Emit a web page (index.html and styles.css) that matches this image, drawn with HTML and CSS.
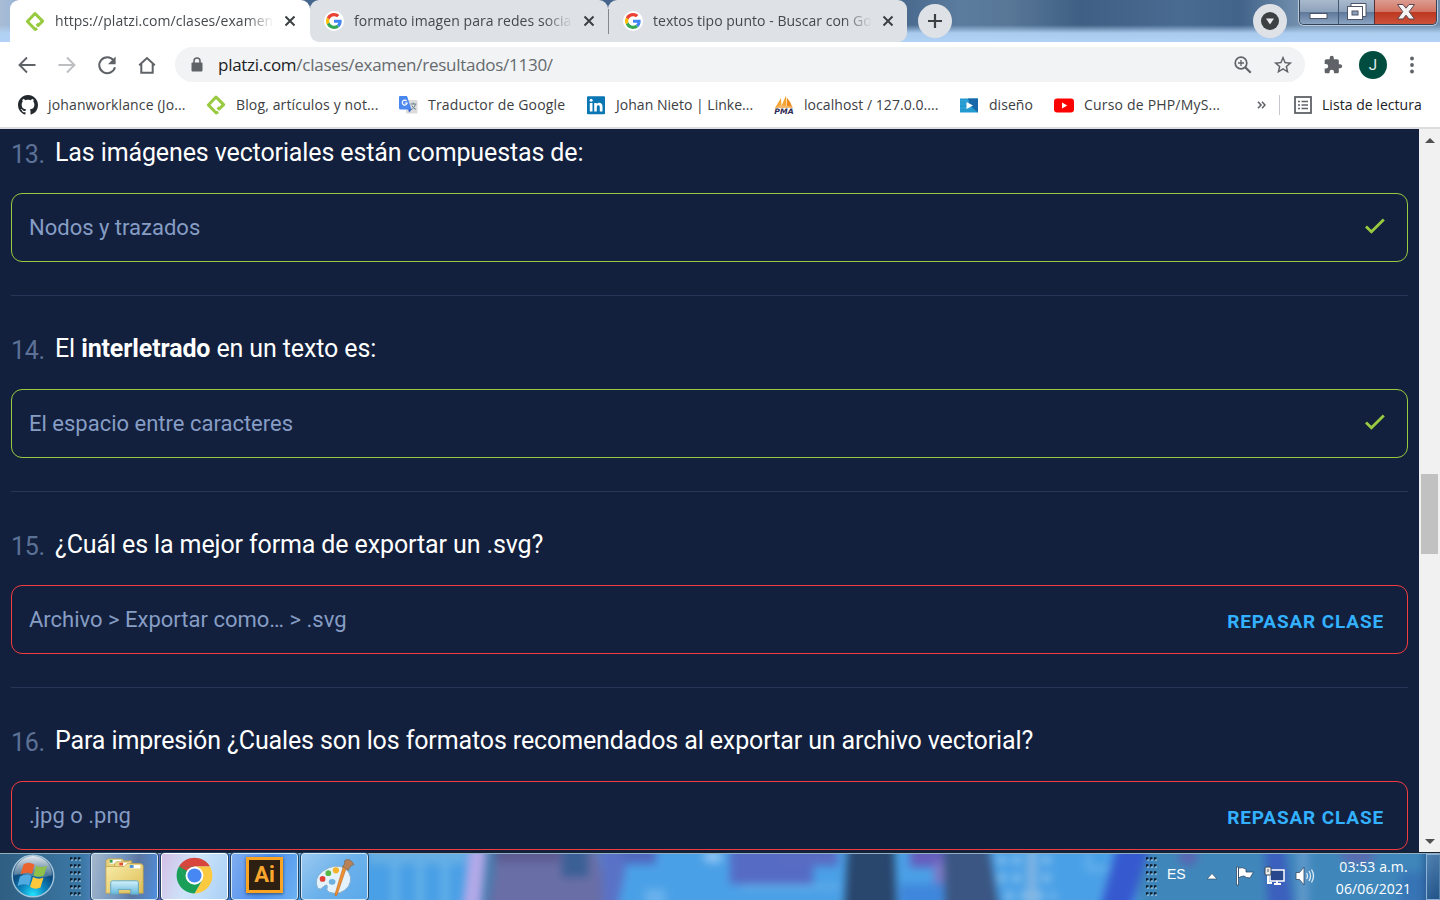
FILE: index.html
```html
<!DOCTYPE html>
<html lang="es">
<head>
<meta charset="utf-8">
<title>Platzi - Resultados del examen</title>
<link rel="stylesheet" href="styles.css">
</head>
<body>
<svg class="defs" width="0" height="0" aria-hidden="true">
  <defs>
    <symbol id="platzi" viewBox="0 0 20 20"><path d="M12.300 17L10.200 18L2.400 10L10 2L17.600 9.600L13.200 14L11.600 12.400" fill="none" stroke="#98ca3f" stroke-width="3" stroke-linejoin="round"/></symbol>
    <symbol id="google" viewBox="0 0 48 48"><path fill="#EA4335" d="M24 9.5c3.54 0 6.71 1.22 9.21 3.6l6.85-6.85C35.9 2.38 30.47 0 24 0 14.62 0 6.51 5.38 2.56 13.22l7.98 6.19C12.43 13.72 17.74 9.5 24 9.5z"/><path fill="#4285F4" d="M46.98 24.55c0-1.57-.15-3.09-.38-4.55H24v9.02h12.94c-.58 2.96-2.26 5.48-4.78 7.18l7.73 6c4.51-4.18 7.09-10.36 7.09-17.65z"/><path fill="#FBBC05" d="M10.53 28.59c-.48-1.45-.76-2.99-.76-4.59s.27-3.14.76-4.59l-7.98-6.19C.92 16.46 0 20.12 0 24c0 3.88.92 7.54 2.56 10.78l7.97-6.19z"/><path fill="#34A853" d="M24 48c6.48 0 11.93-2.13 15.89-5.81l-7.73-6c-2.15 1.45-4.92 2.3-8.16 2.3-6.26 0-11.57-4.22-13.47-9.91l-7.98 6.19C6.51 42.62 14.62 48 24 48z"/></symbol>
    <symbol id="close" viewBox="0 0 12 12"><path d="M1.5 1.5 L10.5 10.5 M10.5 1.5 L1.5 10.5" stroke="#3c4043" stroke-width="2"/></symbol>
    <symbol id="check" viewBox="0 0 20 16"><path d="M1 8.6 L6.4 13.8 L18.8 1.4" fill="none" stroke="#98ca3f" stroke-width="2.8"/></symbol>
    <symbol id="grip" viewBox="0 0 12 40"><path d="M1 2.5H12 M1 9.5H12 M1 16.5H12 M1 23.5H12 M1 30.5H12 M1 37.5H12" stroke="#0c1c2c" stroke-width="2.4" stroke-dasharray="2.4 1.6"/><path d="M2 4H12 M2 11H12 M2 18H12 M2 25H12 M2 32H12 M2 39H12" stroke="#c3dcec" stroke-width="1" stroke-dasharray="2 2"/></symbol>
  </defs>
</svg>

<div class="desktop">
  <header class="titlebar">
    <div class="tab tab-active">
      <svg class="fav fav-platzi"><use href="#platzi"/></svg>
      <span class="tab-text t1">https://platzi.com/clases/examen</span>
      <svg class="tab-close"><use href="#close"/></svg>
    </div>
    <div class="tab">
      <span class="g-disc"><svg><use href="#google"/></svg></span>
      <span class="tab-text t2">formato imagen para redes socia</span>
      <svg class="tab-close"><use href="#close"/></svg>
    </div>
    <div class="tab tab-sep">
      <span class="g-disc"><svg><use href="#google"/></svg></span>
      <span class="tab-text t3">textos tipo punto - Buscar con Go</span>
      <svg class="tab-close"><use href="#close"/></svg>
    </div>
    <span class="round-btn plus"><svg viewBox="0 0 16 16"><path d="M8 1V15M1 8H15" stroke="#3c4043" stroke-width="2.2"/></svg></span>
    <span class="round-btn search"><svg viewBox="0 0 18 18"><circle cx="9" cy="9" r="9" fill="#3c4043"/><path d="M5 6.5H13L9 12.5Z" fill="#e8eaed"/></svg></span>
    <div class="win">
      <span class="win-b"><svg width="20" height="8" viewBox="0 0 20 8"><rect x="1" y="1.5" width="17" height="5" fill="#fff" stroke="#4e5568"/></svg></span>
      <span class="win-b win-mid"><svg width="22" height="20" viewBox="0 0 22 20"><path d="M5 1.5H20V14.5H5Z" fill="#fff" stroke="#4e5568"/><rect x="1.500" y="4.500" width="15" height="13" fill="#fff" stroke="#4e5568"/><rect x="6" y="9" width="6" height="4" fill="#8da1ba" stroke="#4e5568"/></svg></span>
      <span class="win-b win-x"><svg width="20" height="18" viewBox="0 0 20 18"><path d="M1.500 1.500H7L10 5.200L13 1.500H18.500L13.200 8.700L18.500 16H13L10 12.200L7 16H1.500L6.800 8.700Z" fill="#f6f3f3" stroke="#5a4650"/></svg></span>
    </div>
  </header>

  <div class="toolbar">
    <svg class="tool" viewBox="0 0 24 24"><path d="M20.500 12H5M12 4.500L4.500 12L12 19.500" fill="none" stroke="#5f6368" stroke-width="1.900"/></svg>
    <svg class="tool" viewBox="0 0 24 24"><path d="M3.500 12H19M12 4.500L19.500 12L12 19.500" fill="none" stroke="#bcbec1" stroke-width="1.900"/></svg>
    <svg class="tool" viewBox="0 0 24 24"><path d="M18.600 7.300A8 8 0 1 0 20 14.300" fill="none" stroke="#5f6368" stroke-width="2"/><path d="M20.600 3.600V11.200H13Z" fill="#5f6368"/></svg>
    <svg class="tool" viewBox="0 0 24 24"><path d="M4.200 12.300L12 5L19.800 12.300M6.300 10.500V19.700H17.700V10.500" fill="none" stroke="#5f6368" stroke-width="2"/></svg>
    <div class="omnibox">
      <svg class="lock" viewBox="0 0 12 16"><path d="M3 6V4A3 3 0 0 1 9 4V6" fill="none" stroke="#5f6368" stroke-width="1.500"/><rect x=".5" y="5.500" width="11" height="9" rx="1" fill="#5f6368"/></svg>
      <span class="url"><b>platzi.com</b>/clases/examen/resultados/1130/</span>
      <svg class="zoom" viewBox="0 0 20 20"><circle cx="8" cy="8" r="5.800" fill="none" stroke="#5f6368" stroke-width="1.700"/><path d="M5 8H11M8 5V11" stroke="#5f6368" stroke-width="1.300"/><path d="M12.200 12.200L17.700 17.700" stroke="#5f6368" stroke-width="2.200"/></svg>
      <svg class="star" viewBox="0 0 24 24"><path fill="#5f6368" d="M22 9.240l-7.190-.62L12 2 9.190 8.630 2 9.240l5.460 4.730L5.820 21 12 17.270 18.180 21l-1.630-7.030L22 9.240zM12 15.400l-3.760 2.270 1-4.280-3.320-2.880 4.380-.38L12 6.100l1.710 4.040 4.380.38-3.320 2.880 1 4.280L12 15.400z"/></svg>
    </div>
    <svg class="puzzle" viewBox="0 0 24 24"><path fill="#5f6368" d="M20.500 11H19V7c0-1.100-.9-2-2-2h-4V3.500a2.500 2.500 0 0 0-5 0V5H4c-1.100 0-2 .9-2 2v3.800h1.500a2.700 2.700 0 0 1 0 5.400H2V20c0 1.100.9 2 2 2h3.800v-1.500a2.700 2.700 0 0 1 5.400 0V22H17c1.100 0 2-.9 2-2v-4h1.500a2.500 2.500 0 0 0 0-5z"/></svg>
    <span class="avatar">J</span>
    <svg class="dots" viewBox="0 0 4 18"><g fill="#5f6368"><circle cx="2" cy="2.500" r="1.900"/><circle cx="2" cy="9" r="1.900"/><circle cx="2" cy="15.500" r="1.900"/></g></svg>
  </div>

  <nav class="bookmarks">
    <span class="bm bm-1"><svg viewBox="0 0 16 16"><path fill="#24292e" d="M8 0C3.580 0 0 3.580 0 8c0 3.540 2.290 6.530 5.470 7.590.4.070.55-.17.55-.38 0-.19-.01-.82-.01-1.490-2.010.37-2.530-.49-2.690-.94-.09-.23-.48-.94-.82-1.130-.28-.15-.68-.52-.01-.53.63-.01 1.080.58 1.230.82.72 1.210 1.870.87 2.330.66.07-.52.28-.87.51-1.070-1.780-.2-3.640-.89-3.640-3.950 0-.87.31-1.590.82-2.150-.08-.2-.36-1.020.08-2.120 0 0 .67-.21 2.200.82.64-.18 1.320-.27 2-.27s1.360.09 2 .27c1.530-1.040 2.200-.82 2.200-.82.44 1.100.16 1.920.08 2.120.51.56.82 1.270.82 2.150 0 3.070-1.870 3.750-3.650 3.950.29.25.54.73.54 1.480 0 1.070-.01 1.930-.01 2.200 0 .21.15.46.55.38A8.010 8.010 0 0 0 16 8c0-4.420-3.580-8-8-8z"/></svg><span>johanworklance (Jo...</span></span>
    <span class="bm bm-2"><svg><use href="#platzi"/></svg><span>Blog, artículos y not...</span></span>
    <span class="bm bm-3"><svg viewBox="0 0 20 20"><rect x="8" y="5" width="11.500" height="13.500" rx="1" fill="#dcdcdc"/><path d="M11 17.500L14 14L10 13Z" fill="#3559c7"/><path d="M1.500 1H9L13.500 14.500H2.500Q1 14.500 1 13V2Z" fill="#4a87ee"/><path d="M12.500 9H18.500M15.300 7.500V9M17.500 9C17 12 14.500 14 13.500 14.500M13.800 10.500Q15 13 18 14.500" stroke="#6e8492" stroke-width="1" fill="none"/><path d="M8.700 6A2.500 2.500 0 1 0 9.200 8H6.700" fill="none" stroke="#fff" stroke-width="1.200"/></svg><span>Traductor de Google</span></span>
    <span class="bm bm-4"><svg viewBox="0 0 20 20"><rect x="1" y="1.300" width="18" height="18" rx="1" fill="#0a76b4"/><g fill="#fff"><rect x="3.800" y="8" width="2.700" height="8.500"/><circle cx="5.150" cy="5.200" r="1.500"/><path d="M8.200 8h2.600v1.200c1.600-2.300 5.700-1.800 5.700 2.300v5h-2.700v-4.500c0-2.500-3-2.300-3 0v4.500H8.200z"/></g></svg><span>Johan Nieto | Linke...</span></span>
    <span class="bm bm-5"><svg viewBox="0 0 20 20"><path d="M1 13L7 3L7.500 13ZM7 12L12 .5L12.500 11Z" fill="#f3a32f"/><path d="M12.800 2.500Q17 7 18.700 13L13 12Z" fill="#ee8b1f"/><path d="M1 13L6 10L18 11.500L19 13Z" fill="#f5b76a"/><text x=".2" y="19.200" textLength="19.500" lengthAdjust="spacingAndGlyphs" class="pma">PMA</text></svg><span>localhost / 127.0.0....</span></span>
    <span class="bm bm-6"><svg viewBox="0 0 20 20"><rect x="1" y="3.500" width="18" height="14" fill="#2299cf"/><path d="M9 3.500H19V17.500L11 10.500Z" fill="#1767a9"/><path d="M1 6H10M1 9H10M1 13H12" stroke="#47b0dc" stroke-width=".7"/><path d="M7.500 7V14L14 10.500Z" fill="#fff"/></svg><span>diseño</span></span>
    <span class="bm bm-7"><svg viewBox="0 0 20 20"><rect x="0" y="3.500" width="20" height="14" rx="3.200" fill="#f00"/><path d="M8 7.500V13.500L13.200 10.500Z" fill="#fff"/></svg><span>Curso de PHP/MyS...</span></span>
    <svg class="more" viewBox="0 0 9 8"><path d="M1 .8L4 4L1 7.200M5 .8L8 4L5 7.200" fill="none" stroke="#5f6368" stroke-width="1.600"/></svg>
    <span class="bm reading"><svg viewBox="0 0 18 18"><rect x="1" y="1" width="16" height="16" fill="none" stroke="#5f6368" stroke-width="1.800"/><path d="M4 5.500H6M4 9H6M4 12.500H6M7.500 5.500H14M7.500 9H14M7.500 12.500H14" stroke="#5f6368" stroke-width="1.600"/></svg><span>Lista de lectura</span></span>
  </nav>

  <div class="viewport">
    <main class="page">
      <section class="question">
        <h2><span class="num">13.</span><span class="q q1">Las imágenes vectoriales están compuestas de:</span></h2>
        <div class="answer ok"><span>Nodos y trazados</span><svg class="check"><use href="#check"/></svg></div>
      </section>
      <section class="question">
        <h2><span class="num">14.</span><span class="q">El <strong>interletrado</strong> en un texto es:</span></h2>
        <div class="answer ok"><span>El espacio entre caracteres</span><svg class="check"><use href="#check"/></svg></div>
      </section>
      <section class="question">
        <h2><span class="num">15.</span><span class="q">¿Cuál es la mejor forma de exportar un .svg?</span></h2>
        <div class="answer bad"><span>Archivo &gt; Exportar como… &gt; .svg</span><a>REPASAR CLASE</a></div>
      </section>
      <section class="question">
        <h2><span class="num">16.</span><span class="q">Para impresión ¿Cuales son los formatos recomendados al exportar un archivo vectorial?</span></h2>
        <div class="answer bad"><span>.jpg o .png</span><a>REPASAR CLASE</a></div>
      </section>
    </main>
    <div class="scroll">
      <svg class="arrow" viewBox="0 0 10 5"><path d="M0 5L5 0L10 5Z" fill="#505050"/></svg>
      <div class="thumb"></div>
      <svg class="arrow down" viewBox="0 0 10 5"><path d="M0 0L5 5L10 0Z" fill="#505050"/></svg>
    </div>
  </div>

  <footer class="taskbar">
    <svg class="wall" viewBox="0 0 1440 48" preserveAspectRatio="none">
      <defs>
        <filter id="soft" filterUnits="userSpaceOnUse" x="-20" y="-20" width="1480" height="90" color-interpolation-filters="sRGB"><feGaussianBlur stdDeviation="4"/></filter>
        <linearGradient id="tl"><stop offset="0" stop-color="#2c5878"/><stop offset="1" stop-color="#3d7cab"/></linearGradient>
      </defs>
      <rect width="1440" height="48" fill="#4aa0e6"/>
      <g filter="url(#soft)">
        <rect x="-20" y="-20" width="1480" height="90" fill="#4aa0e6"/>
        <rect x="-20" y="-10" width="115" height="70" fill="url(#tl)"/>
        <rect x="90" y="-10" width="70" height="70" fill="#5d83c4"/>
        <rect x="158" y="-10" width="12" height="70" fill="#555bc0"/>
        <rect x="228" y="-10" width="12" height="70" fill="#3466cf"/>
        <rect x="368" y="-10" width="98" height="22" fill="#65aee4"/>
        <path d="M395 10V60M420 10V60M445 10V60" stroke="#70b7ea" stroke-width="5"/>
        <path d="M470 -10H488L480 60H462Z" fill="#b3a9e8"/>
        <path d="M487 -10H500L490 60H481Z" fill="#477bae"/>
        <path d="M496 -10H596Q604 25 604 60H486Q497 25 496 -10Z" fill="#696ea6"/>
        <path d="M496 -10H560V10H496Z" fill="#5d5a90"/>
        <rect x="562" y="-10" width="26" height="35" fill="#3b6096"/>
        <path d="M598 -10H625V20L616 60H602Q604 20 598 -10Z" fill="#5a72c6"/>
        <rect x="622" y="-10" width="34" height="22" fill="#5168bf"/>
        <ellipse cx="713" cy="5" rx="10" ry="6" fill="#91c5f4"/>
        <rect x="645" y="37" width="20" height="18" fill="#69b1ed"/>
        <rect x="730" y="-10" width="83" height="42" fill="#566bc4"/>
        <rect x="780" y="-10" width="58" height="24" fill="#596cc3"/>
        <path d="M740 35H840" stroke="#71b4ed" stroke-width="3"/>
        <path d="M848 -10H894L897 60H844Z" fill="#29466d"/>
        <rect x="910" y="-10" width="34" height="25" fill="#665ebd"/>
        <rect x="934" y="10" width="10" height="22" fill="#8078c5"/>
        <rect x="900" y="32" width="44" height="28" fill="#3f87dc"/>
        <path d="M944 -10H988L1000 60H945Z" fill="#3b5682"/>
        <path d="M998 8H1055M998 26H1055M1006 44H1055" stroke="#9acaf0" stroke-width="7" stroke-dasharray="7 8"/>
        <rect x="1027" y="-10" width="10" height="70" fill="#82b5e3"/>
        <path d="M1088 0V17H1110" fill="none" stroke="#72bdf0" stroke-width="3"/>
        <rect x="1138" y="-10" width="310" height="70" fill="#3f87bb"/>
        <path d="M1118 -10H1151L1130 60H1099Z" fill="#3659cf"/>
        <ellipse cx="1188" cy="5" rx="10" ry="9" fill="#5967b2"/>
        <path d="M1264 -10H1284L1294 60H1268Z" fill="#3b60bd"/>
        <rect x="1298" y="-10" width="10" height="70" fill="#6399cc"/>
        <ellipse cx="1358" cy="3" rx="18" ry="9" fill="#5a6bb0"/>
        <rect x="1400" y="20" width="24" height="40" fill="#3774b5"/>
        <rect x="1424" y="-10" width="20" height="70" fill="#285b93"/>
      </g>
      <rect width="1440" height="1" fill="#18222f"/><rect y="1" width="1440" height="1" fill="#8fafc6"/>
    </svg>
    <svg class="orb" viewBox="0 0 44 44">
      <defs><radialGradient id="og" cx=".5" cy=".95" r=".9"><stop offset="0" stop-color="#22e2ff"/><stop offset=".35" stop-color="#0d83bd"/><stop offset=".65" stop-color="#0b4b7f"/><stop offset="1" stop-color="#4f7898"/></radialGradient><linearGradient id="os" x2="0" y2="1"><stop offset="0" stop-color="#e2e9ef"/><stop offset="1" stop-color="#7a95aa" stop-opacity=".5"/></linearGradient></defs>
      <circle cx="22" cy="22" r="20.800" fill="url(#og)" stroke="#a5c6da" stroke-width="1.400"/>
      <path d="M3 21A19 19 0 0 1 41 21Q31 25 22 22T3 21Z" fill="url(#os)"/>
      <path d="M12.500 10.500Q17 7 23.500 10.500L21 20Q15.500 17.500 9.500 20.500Z" fill="#eb6430"/>
      <path d="M25 11.500Q30 14.500 36 11.500L33 21.500Q28 24 22.500 21.500Z" fill="#8fc14a"/>
      <path d="M9 22.500Q15 19 20.500 22L18 31.500Q12.500 29 6.500 32Z" fill="#51aae0"/>
      <path d="M22 23Q28 26 32.500 23.500L29.500 33.500Q24.500 36 19 33Z" fill="#fdc83b"/>
    </svg>
    <svg class="grip"><use href="#grip"/></svg>
    <div class="apps">
      <span class="app app-files"><svg viewBox="0 0 44 40">
        <defs><linearGradient id="fo" x2="1" y2="1"><stop offset="0" stop-color="#f8edaa"/><stop offset="1" stop-color="#dfbd55"/></linearGradient><linearGradient id="fb" x2="0" y2="1"><stop offset="0" stop-color="#d3f2fa"/><stop offset="1" stop-color="#64b7dc"/></linearGradient></defs>
        <path d="M2 10V3L4 1H19L21 3H29V12H2Z" fill="#e7d17d" stroke="#b99b45" stroke-width=".7"/><rect x="6" y="2" width="12" height="4" fill="#fff"/><rect x="6" y="2" width="3" height="3" fill="#38a151"/>
        <path d="M11 12V6L13 4H26L28 6H36V14H11Z" fill="#ecd986" stroke="#b99b45" stroke-width=".7"/><rect x="16" y="5" width="11" height="4" fill="#fff"/><rect x="16" y="5" width="4" height="3" fill="#e5532c"/>
        <path d="M2 9H21L24 6H39L41 8V37H2Z" fill="url(#fo)" stroke="#c3a248" stroke-width=".8"/><rect x="27" y="7.500" width="11" height="3.500" fill="#fff"/><rect x="27" y="7.500" width="4" height="3" fill="#4a8fd0"/>
        <path d="M7 38V26Q7 24 9 24H34Q36 24 36 26V38H28V33H15V38Z" fill="url(#fb)" stroke="#65a7c2"/>
      </svg></span>
      <span class="app app-on"><svg viewBox="0 0 48 48"><path d="M24 24L4.950 13A22 22 0 0 1 43.050 13H24Z" fill="#d8453c"/><path d="M24 13H43.050A22 22 0 0 1 24 46L33.500 29.500Z" fill="#fcca40"/><path d="M4.950 13A22 22 0 0 0 24 46L33.500 29.500A11 11 0 0 1 14.500 29.500Z" fill="#1a9f59"/><path d="M4.950 13L14.500 29.500L24 13Z" fill="#1a9f59"/><path d="M4.950 13L20 26L24 13Z" fill="#d8453c"/><path d="M4.950 13L14.500 29.500L18 20Z" fill="#1a9f59"/><circle cx="24" cy="24" r="11" fill="#fff"/><circle cx="24" cy="24" r="8.700" fill="#4687f4"/></svg></span>
      <span class="app app-ai"><span class="ai">Ai</span></span>
      <span class="app"><svg viewBox="0 0 44 40">
        <path d="M4 32Q-1 22 9 14Q22 5 33 11Q42 20 36 30Q28 40 16 36Q12 34 14 30Q14 27 10 30Q7 34 4 32Z" fill="#e4f2fb" stroke="#86adc9"/>
        <ellipse cx="19" cy="25" rx="3.500" ry="3" fill="#6fb0dc"/><circle cx="9" cy="22" r="3" fill="#e34038"/><circle cx="15" cy="16" r="3" fill="#58b846"/><circle cx="23" cy="13" r="3.300" fill="#f6b32c"/>
        <path d="M31 8L34 10L24 39Q22 41 22 38Z" fill="#ee9131" stroke="#b96320" stroke-width=".6"/><path d="M32 3Q37 -1 42 7Q38 7 36 13L30 9Q33 7 32 3Z" fill="#b98256" stroke="#7d5a42" stroke-width=".6"/>
      </svg></span>
    </div>
    <svg class="grip grip-2"><use href="#grip"/></svg>
    <span class="lang">ES</span>
    <svg class="tray tri" viewBox="0 0 12 8"><path d="M1 7L6 1.500L11 7Z" fill="#fff" stroke="#35536e" stroke-width=".7"/></svg>
    <svg class="tray flag" viewBox="0 0 20 20"><path d="M1.500 1H3.500V19H1.500ZM3.500 2Q8 1 11 3V6H18.500L15 12Q11 12 9 10Q6 10 3.500 12Z" fill="#fff" stroke="#2e4967" stroke-width=".8"/></svg>
    <svg class="tray net" viewBox="0 0 21 20"><path d="M4 6V17H8" fill="none" stroke="#fff" stroke-width="2"/><rect x="6" y="4" width="14" height="11" fill="#29478c" stroke="#fff" stroke-width="1.500"/><path d="M10 18H17M13 15V18" stroke="#fff" stroke-width="2"/><rect x="1" y="1" width="6" height="8" rx="1" fill="#eee" stroke="#354455"/><path d="M4 3V6" stroke="#555"/></svg>
    <svg class="tray vol" viewBox="0 0 20 20"><path d="M1 6.500H4.500L9 1V19L4.500 13.500H1Z" fill="#fff" stroke="#2e4967" stroke-width=".8"/><path d="M11.500 7Q13.500 10 11.500 13M14 5Q17 10 14 15M16.500 3.500Q20.500 10 16.500 16.500" fill="none" stroke="#dcebf5" stroke-width="1.300"/></svg>
    <div class="clock"><span>03:53 a.m.</span><span>06/06/2021</span></div>
    <span class="show-desk"></span>
  </footer>
</div>
</body>
</html>
```

FILE: styles.css
```css
* { box-sizing: border-box; }
body { margin: 0; font-family: "Open Sans", "Noto Sans", sans-serif; overflow: hidden; }
svg { display: block; flex: none; }
.defs { position: absolute; }
.desktop { width: 1440px; height: 900px; display: flex; flex-direction: column; overflow: hidden; }

/* tab strip */
.titlebar {
  height: 42px; display: flex; padding-left: 10px; overflow: hidden;
  background:
    linear-gradient(180deg, transparent 25px, rgba(179,212,246,.9) 33px, #b2d3f6 42px),
    linear-gradient(90deg, #a9bcd4 0, #9fb8d8 12px, #45658e 30px, #45648a 890px, #5c7c9e 960px, #587797 1010px, #3f5f84 1080px, #4a6b91 1180px, #42638a 1240px, #7390ae 1300px, #6f8dac 1440px);
}
.tab {
  width: 299px; height: 42px; display: flex; align-items: center; padding-left: 14px;
  background: #dee1e6; border-radius: 9px 9px 0 9px; position: relative;
}
.tab-active { width: 300px; background: #fff; padding-left: 15px; border-radius: 9px 9px 0 0; }
.tab-active + .tab { box-shadow: -9px 9px 0 #fff; width: 298px; }
.tab-sep { border-radius: 9px 9px 9px 0; padding-left: 15px; }
.tab-sep::before { content: ""; position: absolute; left: 0; top: 9px; width: 1px; height: 25px; background: #84888e; }
.fav-platzi { width: 20px; height: 21px; }
.g-disc { width: 20px; height: 20px; border-radius: 50%; background: #fff; display: grid; place-items: center; }
.g-disc svg { width: 16px; height: 16px; }
.tab-text {
  width: 219px; margin-left: 10px; font-size: 14px; line-height: 22px; letter-spacing: .06px; white-space: nowrap; color: #45494d;
  -webkit-mask-image: linear-gradient(90deg, #000 190px, transparent 219px); mask-image: linear-gradient(90deg, #000 190px, transparent 219px);
}
.t3 { letter-spacing: .02px; }
.tab-close { width: 12px; height: 12px; margin-left: 10px; }
.round-btn { width: 34px; height: 34px; border-radius: 50%; background: #dee1e6; display: grid; place-items: center; margin-top: 4px; flex: none; }
.plus { margin-left: 11px; }
.plus svg { width: 16px; height: 16px; }
.search { margin-left: 301px; }
.search svg { width: 18px; height: 18px; }
.win { margin-left: 12px; width: 138px; height: 25px; display: flex; border: 1px solid #33435a; border-top: 0; border-radius: 0 0 5px 5px; box-shadow: 0 0 0 1px rgba(230,240,250,.6); overflow: hidden; }
.win-b { width: 38px; display: grid; place-items: center; background: linear-gradient(#a9bacd 0, #8da2bb 48%, #5d7799 50%, #8ba4c2 100%); }
.win-b:first-child svg { margin-top: 8px; }
.win-mid { width: 36px; border-left: 1px solid #445770; }
.win-x { width: 62px; border-left: 1px solid #5a2e36; background: linear-gradient(#dc9c90 0, #d27463 48%, #bd3720 50%, #cc5139 100%); }

/* toolbar */
.toolbar { height: 45px; background: #fff; display: flex; align-items: center; padding-left: 15.4px; }
.tool { width: 24px; height: 24px; margin-right: 16px; }
.tool + .omnibox { margin-left: -.4px; }
.omnibox { width: 1130px; height: 35px; border-radius: 18px; background: #f1f3f4; display: flex; align-items: center; padding-left: 16px; }
.lock { width: 12px; height: 16px; }
.url { margin-left: 15px; width: 1014.500px; font-size: 17px; line-height: 24px; letter-spacing: -.27px; color: #666a6e; white-space: nowrap; }
.url b { font-weight: 400; color: #202124; }
.zoom { width: 20px; height: 20px; }
.star { width: 22px; height: 22px; margin-left: 19px; }
.puzzle { width: 20px; height: 20px; margin-left: 18px; }
.avatar { width: 28px; height: 28px; margin-left: 16px; border-radius: 50%; background: #004d40; color: #e4efed; display: grid; place-items: center; font: 15px Roboto, sans-serif; }
.dots { width: 4px; height: 18px; margin-left: 23px; }

/* bookmarks bar */
.bookmarks { height: 42px; background: #fff; border-bottom: 2px solid #dadce0; display: flex; align-items: center; padding: 0 0 5px 18px; color: #3c4043; font-size: 14px; letter-spacing: .14px; }
.bm { display: flex; align-items: center; gap: 10px; white-space: nowrap; line-height: 20px; flex: none; }
.bm svg { width: 20px; height: 20px; }
.bm-1 { width: 188px; }
.bm-2 { width: 192px; }
.bm-3 { width: 188px; letter-spacing: .18px; }
.bm-4 { width: 188px; letter-spacing: .02px; }
.bm-5 { width: 185px; letter-spacing: .06px; }
.bm-6 { width: 95px; letter-spacing: .04px; }
.bm-7 { width: 202px; letter-spacing: .19px; }
.pma { font: italic 900 7.500px "DejaVu Sans", sans-serif; fill: #2d2b56; }
.more { width: 9px; height: 8px; margin-left: 1px; }
.reading { margin-left: 13px; height: 20px; border-left: 1px solid #c6c9cd; padding-left: 14px; color: #202124; letter-spacing: .04px; }
.reading svg { width: 18px; height: 18px; }

/* exam results */
.viewport { height: 723px; display: flex; overflow: hidden; }
.page { width: 1419px; background: #121f3d; padding: 0 11px; font-family: Roboto, sans-serif; margin-top: -30px; }
.question { height: 196px; border-top: 1px solid #273659; }
.question h2 { margin: 0; height: 93px; padding-top: 36px; display: flex; font-weight: 400; font-size: 25px; line-height: 34px; white-space: nowrap; }
.num { width: 44px; color: #5c7196; letter-spacing: -.3px; padding-top: 2px; }
.q { color: #fff; letter-spacing: -.12px; }
.q strong { font-weight: 700; }
.answer { height: 69px; border: 1px solid #98ca3f; border-radius: 11px; display: flex; align-items: center; justify-content: space-between; padding: 0 22px 0 17px; color: #869dc4; font-size: 22px; }
.answer.bad { border-color: #f23d3f; padding-right: 23px; }
.answer a { color: #33b1ff; font-weight: 700; font-size: 19px; letter-spacing: .85px; padding-top: 3px; }
.check { width: 20px; height: 16px; margin-top: -3px; }
.scroll { width: 21px; background: #f1f1f1; display: flex; flex-direction: column; align-items: center; }
.arrow { width: 10px; height: 5px; margin-top: 9px; }
.thumb { width: 17px; height: 80px; background: #c1c1c1; margin-top: 331px; }
.down { margin-top: auto; margin-bottom: 8px; }

/* taskbar */
.taskbar { height: 48px; display: flex; align-items: center; position: relative; padding-left: 11px; overflow: hidden; color: #fff; }
.taskbar > * { position: relative; flex: none; }
.taskbar > .wall { position: absolute; left: 0; top: 0; width: 1440px; height: 48px; }
.orb { width: 44px; height: 44px; }
.grip { width: 12px; height: 40px; margin-left: 14px; }
.apps { display: flex; gap: 3px; margin-left: 10px; padding-top: 1px; }
.app { width: 67px; height: 47px; border: 1px solid #d5e6f4; border-radius: 3px; outline: 1px solid #22415f; outline-offset: 0; display: grid; place-items: center; background: linear-gradient(135deg, rgba(220,235,250,.55), rgba(170,210,245,.35) 50%, rgba(130,190,245,.3)); }
.app svg { width: 42px; height: 40px; }
.app-files { background: linear-gradient(100deg, #a5b7cc, #6e92bd 45%, #5b76a0 65%, #4e8fe0); }
.app-on { background: linear-gradient(110deg, #d3bfe5, #cde4fa 45%, #a9d0f6); border-color: #fff; }
.app-on svg { width: 39px; height: 39px; margin-top: -2px; }
.app-ai { background: linear-gradient(110deg, #80adf0, #4f90ee 50%, #6bb2f2); }
.ai { width: 37px; height: 36px; margin-top: -3px; background: #2d2012; border: 3px solid #fba422; display: grid; place-items: center; color: #fda82c; font: 700 22px/28px Roboto, sans-serif; box-shadow: 0 1px 3px rgba(0,0,0,.5); }
.grip-2 { margin-left: 777px; }
.lang { margin-left: 10px; width: 30px; font: 14px/20px "Liberation Sans", Arial, sans-serif; margin-top: -4px; }
.tri { width: 12px; height: 8px; margin-left: 9px; }
.flag { width: 20px; height: 20px; margin-left: 17px; }
.net { width: 21px; height: 20px; margin-left: 9px; }
.vol { width: 20px; height: 20px; margin-left: 10px; }
.clock { width: 100px; margin-left: 8.500px; display: flex; flex-direction: column; align-items: center; font-size: 14px; line-height: 22px; padding-top: 3px; letter-spacing: .1px; }
.show-desk { width: 14px; height: 46px; margin-left: auto; border: 1px solid #8db2d3; border-right-color: #5683ab; background: linear-gradient(135deg, rgba(120,165,205,.5), rgba(25,70,120,.4)); margin-top: 2px; }
```
